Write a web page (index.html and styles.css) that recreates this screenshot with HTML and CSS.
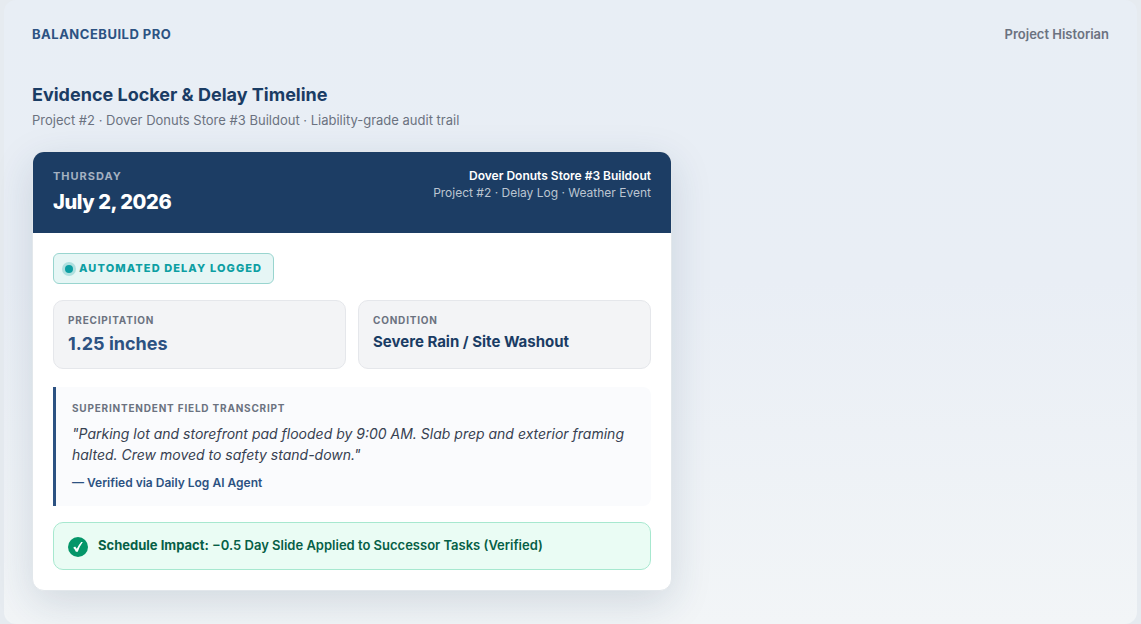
FILE: index.html
```
<!DOCTYPE HTML>
<html lang="en">
<head>
<meta charset="utf-8">
<meta name="viewport" content="width=device-width, initial-scale=1">
<title>BalanceBuild Pro - Project Historian</title>
<link rel="stylesheet" href="styles.css">
</head>

<body>
<div class="panel">
	<header class="topbar">
		<span class="brand">BALANCEBUILD PRO</span>
		<span class="section">Project Historian</span>
	</header>

	<main>
		<h1 class="title">Evidence Locker &amp; Delay Timeline</h1>
		<p class="subtitle">Project #2 · Dover Donuts Store #3 Buildout · Liability-grade audit trail</p>

		<article class="card">
			<div class="card-head">
				<div>
					<div class="weekday">THURSDAY</div>
					<h2 class="date">July 2, 2026</h2>
				</div>
				<div class="meta">
					<strong>Dover Donuts Store #3 Buildout</strong>
					<span>Project #2 · Delay Log · Weather Event</span>
				</div>
			</div>

			<div class="card-body">
				<div class="badge"><i class="dot"></i>AUTOMATED DELAY LOGGED</div>

				<div class="stats">
					<div class="stat">
						<div class="label">PRECIPITATION</div>
						<div class="value big">1.25 inches</div>
					</div>
					<div class="stat">
						<div class="label">CONDITION</div>
						<div class="value">Severe Rain / Site Washout</div>
					</div>
				</div>

				<div class="transcript">
					<div class="label">SUPERINTENDENT FIELD TRANSCRIPT</div>
					<p class="quote">"Parking lot and storefront pad flooded by 9:00 AM. Slab prep and exterior framing halted. Crew moved to safety stand-down."</p>
					<p class="source">— Verified via Daily Log AI Agent</p>
				</div>

				<div class="impact">
					<svg class="check" viewBox="0 0 20 20" aria-hidden="true">
						<circle cx="10" cy="10" r="10" fill="#059669"/>
						<path d="M5.2 10.8 L7.1 9.6 L8.8 11.8 Q10.6 7.8 13.2 4.9 L14.8 5.1 Q11.6 9.5 9.8 14.7 L7.9 14.7 Q6.9 12.5 5.2 10.8Z" fill="#fff"/>
					</svg>
					<p><strong>Schedule Impact:</strong> −0.5 Day Slide Applied to Successor Tasks (Verified)</p>
				</div>
			</div>
		</article>
	</main>
</div>
</body>
</html>
```
FILE: styles.css
```
* {margin:0; padding:0; box-sizing:border-box;}
body {padding:0 4px; background:#e6ebf0; font-family:Inter, "Liberation Sans", sans-serif; color:#1e3a5f;}

.panel {min-height:100vh; padding:24px 28px 32px; border-radius:12px; background:linear-gradient(180deg, #e8eef5 0%, #e9eef5 45%, #f2f5f7 100%);}

.topbar {display:flex; justify-content:space-between; align-items:center; margin-bottom:40px; font-size:13px; line-height:20px;}
.brand {font-weight:700; letter-spacing:0.5px; color:#2c5282;}
.section {font-weight:600; color:#6b7280;}

.title {font-size:18px; line-height:22px; font-weight:700; color:#1a3c64;}
.subtitle {margin:5px 0 22px; font-size:13px; line-height:18px; color:#6b7280;}

/* card */
.card {max-width:640px; border:1px solid #e2e7eb; border-radius:12px; background:#fff; overflow:hidden; box-shadow:0 12px 40px rgba(30,58,95,0.15);}
.card-head {display:flex; justify-content:space-between; padding:15px 20px 17px; background:#1c3d64; color:#fff;}
.weekday {margin-bottom:3px; font-size:11px; line-height:18px; font-weight:700; letter-spacing:1px; color:#a4b1c1;}
.date {font-size:20px; line-height:28px; font-weight:800; letter-spacing:-0.4px;}
.meta {font-size:12px; line-height:17px; text-align:right; color:#bbc5d1;}
.meta strong {display:block; font-weight:600; color:#fff;}
.card-body {padding:20px;}

.badge {display:inline-flex; align-items:center; gap:6px; padding:6px 11px; border:1px solid #99d5cf; border-radius:6px; background:#e6f6f5; font-size:11px; line-height:17px; font-weight:800; letter-spacing:0.1em; color:#0d9fa3;}
.dot {width:8px; height:8px; border-radius:50%; background:#0d9fa3; box-shadow:0 0 0 3px #b0e0df;}

.stats {display:grid; grid-template-columns:1fr 1fr; gap:12px; margin:16px 0 18px;}
.stat {padding:11px 14px 13px; border:1px solid #e5e7eb; border-radius:10px; background:#f3f4f6;}
.label {font-size:10px; line-height:16px; font-weight:700; letter-spacing:0.8px; color:#6b7280;}
.value {margin-top:4px; font-size:15px; line-height:20px; font-weight:700; color:#1a3c64;}
.value.big {font-size:18px; line-height:23px; color:#2c5282;}

.transcript {padding:13px 16px 14px; border-left:3px solid #2c5282; border-radius:0 8px 8px 0; background:#fafbfd;}
.quote {margin:7px 0 9px; font-size:14px; line-height:21px; font-style:italic; color:#374151;}
.source {font-size:12px; line-height:18px; font-weight:600; color:#2c5282;}

.impact {display:flex; gap:10px; margin-top:16px; padding:13px 14px 12px; border:1px solid #a7e8cf; border-radius:10px; background:#eafcf4; font-size:13px; line-height:18px; font-weight:600; color:#065f46;}
.impact strong {font-weight:700;}
.check {flex:none; width:20px; height:20px; margin-top:1px;}
```
